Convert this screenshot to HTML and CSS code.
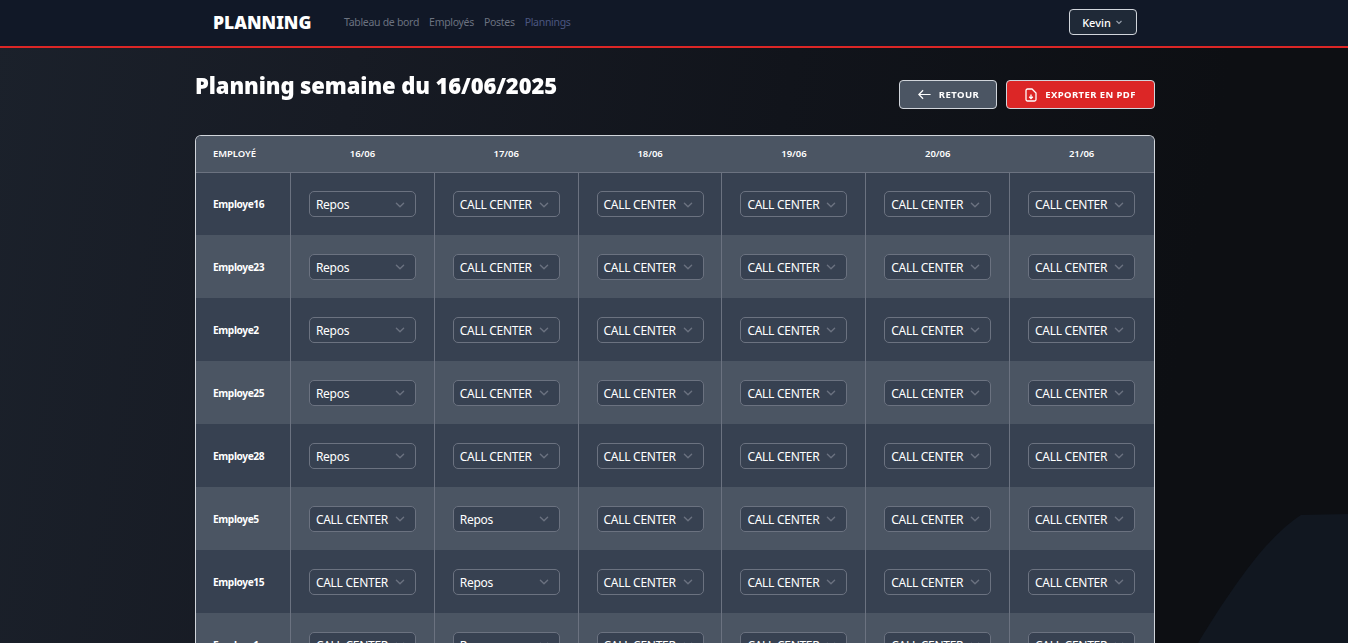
FILE: index.html
```html
<!DOCTYPE html>
<html lang="fr">
<head>
<meta charset="utf-8">
<title>Planning</title>
<link rel="stylesheet" href="styles.css">
</head>
<body>
<svg class="bg-shape" viewBox="0 0 1348 643" aria-hidden="true"><path d="M1198 643C1222 603 1248 566 1266 546C1280 531 1290 522 1301 515L1348 514V643Z" fill="#111720"/></svg>
<div class="shell">
<header class="topbar">
  <div class="topbar-inner">
    <div class="topbar-left">
      <span class="brand">PLANNING</span>
      <nav class="nav">
        <a class="nav-link">Tableau de bord</a>
        <a class="nav-link">Employés</a>
        <a class="nav-link">Postes</a>
        <a class="nav-link nav-link-active">Plannings</a>
      </nav>
    </div>
    <button class="user-btn">Kevin <svg class="user-chev" viewBox="0 0 10 10"><path d="M2.500 4l2.500 2.500L7.500 4" fill="none" stroke="currentColor" stroke-width="1.100"/></svg></button>
  </div>
</header>
<main class="page">
  <div class="page-head">
    <h1 class="title">Planning semaine du 16/06/2025</h1>
    <div class="actions">
      <button class="btn btn-back"><svg class="btn-icon-back" viewBox="0 0 16 16"><path d="M14.500 8H2M6.500 3.500L2 8l4.500 4.500" fill="none" stroke="currentColor" stroke-width="1.300"/></svg>RETOUR</button>
      <button class="btn btn-pdf"><svg class="btn-icon-pdf" viewBox="0 0 12 14"><path d="M2.500 1h4.500l4 4v6.500a1.500 1.500 0 0 1-1.500 1.500h-7A1.500 1.500 0 0 1 1 11.500v-9A1.500 1.500 0 0 1 2.500 1zM6 6.500v4M4.200 8.700L6 10.500l1.800-1.800" fill="none" stroke="currentColor" stroke-width="1.300"/></svg>EXPORTER EN PDF</button>
    </div>
  </div>
  <table class="grid">
    <thead>
      <tr><th class="th-name">EMPLOYÉ</th><th>16/06</th><th>17/06</th><th>18/06</th><th>19/06</th><th>20/06</th><th>21/06</th></tr>
    </thead>
    <tbody id="rows"></tbody>
  </table>
</main>
</div>
<script src="app.js"></script>
</body>
</html>
```
FILE: app.js
```js
var data = [
  ["Employe16", 0], ["Employe23", 0], ["Employe2", 0], ["Employe25", 0],
  ["Employe28", 0], ["Employe5", 1], ["Employe15", 1], ["Employe1", 1]
];
var chev = '<svg class="chev" viewBox="0 0 20 20"><path d="M6 8l4 4 4-4" fill="none" stroke="currentColor" stroke-width="1.500" stroke-linecap="round" stroke-linejoin="round"/></svg>';
var html = "";
data.forEach(function (r) {
  html += '<tr><td class="td-name">' + r[0] + "</td>";
  for (var d = 0; d < 6; d++) {
    var repos = r[1] === d;
    html += '<td class="td-cell"><div class="select"><span class="select-text">' +
      (repos ? "Repos" : "CALL CENTER") + "</span>" + chev + "</div></td>";
  }
  html += "</tr>";
});
document.getElementById("rows").innerHTML = html;
```
FILE: styles.css
```css
* { box-sizing: border-box; }
html, body { margin: 0; height: 100%; overflow: hidden; }
body {
  font-family: "Noto Sans", "Open Sans", sans-serif;
  color: #fff;
  background: linear-gradient(100deg, #1b212b 0%, #171b24 25%, #11141b 55%, #0d0f13 85%);
}
.bg-shape { position: fixed; left: 0; top: 0; width: 1348px; height: 643px; }
.shell { position: relative; }
.topbar { height: 48px; background: #111827; border-bottom: 2px solid #dc2626; padding-left: 2px; }
.topbar-inner { width: 960px; margin: 0 auto; height: 44px; padding: 0 18px; display: flex; align-items: center; justify-content: space-between; }
.topbar-left { display: flex; align-items: center; }
.brand { font-weight: 900; font-size: 17.500px; width: 131px; }
.nav { display: flex; gap: 10px; margin-top: -1px; }
.nav-link { font-size: 10.500px; letter-spacing: -.3px; color: #6b7280; }
.nav-link-active { color: #4b5680; }
.user-btn { font: 500 11px "Noto Sans", sans-serif; color: #fff; background: #1f2937; border: 1px solid #d1d5db; border-radius: 4px; width: 68px; height: 26px; display: flex; align-items: center; justify-content: center; gap: 3px; padding: 0; }
.user-chev { width: 10px; height: 10px; color: #9ca3af; }
.page { width: 960px; margin: 0 auto; padding-top: 22px; position: relative; left: 1px; }
.page-head { display: flex; justify-content: space-between; align-items: flex-start; height: 65px; }
.title { margin: 0; font-size: 22px; line-height: 30px; font-weight: 900; letter-spacing: -.1px; }
.actions { display: flex; gap: 9px; margin-top: 10px; }
.btn { height: 29px; border: 1px solid #d1d5db; border-radius: 4px; color: #fff; font: 700 9.500px "Noto Sans", sans-serif; letter-spacing: .42px; display: flex; align-items: center; justify-content: center; padding: 0; }
.btn-back { width: 98px; background: #4b5563; gap: 7px; }
.btn-pdf { width: 149px; background: #dc2626; gap: 8px; }
.btn-icon-back { width: 15px; height: 15px; }
.btn-icon-pdf { width: 12px; height: 14px; }
.grid { width: 960px; table-layout: fixed; border-collapse: separate; border-spacing: 0; border: 1px solid #d1d5db; border-bottom: 0; border-radius: 6px 6px 0 0; background: #374151; overflow: hidden; }
.grid th { height: 37px; background: #4b5563; border-bottom: 1px solid #6b7280; font-size: 9.500px; font-weight: 600; letter-spacing: -.05px; padding: 0 1px 2px 0; text-align: center; }
.grid th.th-name { width: 95px; text-align: left; padding-left: 17px; }
.grid td { height: 63px; padding: 0; }
.grid tbody tr:first-child td { height: 62px; }
.grid tbody tr:nth-child(odd) td { background: #374151; }
.grid tbody tr:nth-child(even) td { background: #4b5563; }
.td-name { font-size: 10.200px; font-weight: 700; letter-spacing: -.4px; padding-left: 17px !important; border-right: 1px solid #6b7280; }
.td-cell { border-right: 1px solid #6b7280; }
.td-cell:last-child { border-right-color: transparent; }
.select { width: 107px; height: 26px; margin: 0 auto; border: 1px solid #6b7280; border-radius: 5px; background: #374151; display: flex; align-items: center; justify-content: space-between; padding: 1px 6px 0; font-size: 12px; letter-spacing: -.28px; }
.chev { width: 18px; height: 18px; color: #6b7280; flex: none; }
```
